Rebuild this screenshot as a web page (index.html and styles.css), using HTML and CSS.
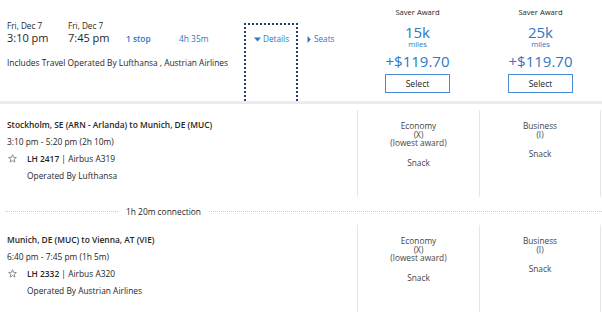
FILE: index.html
```html
<!DOCTYPE html>
<html lang="en">
<head>
    <meta charset="UTF-8">
    <title>Flight details</title>
    <link rel="stylesheet" href="styles.css">
</head>
<body>

    <div class="flight-row">
        <div class="trip">
            <div class="times">
                <div class="time-block dep">
                    <div class="date">Fri, Dec 7</div>
                    <div class="clock">3:10 pm</div>
                </div>
                <div class="time-block arr">
                    <div class="date">Fri, Dec 7</div>
                    <div class="clock">7:45 pm</div>
                </div>
                <div class="stops">1 stop</div>
                <div class="duration">4h 35m</div>
            </div>
            <div class="operated">Includes Travel Operated By Lufthansa , Austrian Airlines</div>
        </div>

        <div class="details-col">
            <a href="#" class="toggle">
                <svg width="7" height="5" viewBox="0 0 7 5"><path d="M0 0.5 H7 L3.5 4.5 Z" fill="#2f78c4"/></svg>Details
            </a>
        </div>

        <div class="seats-col">
            <a href="#" class="toggle">
                <svg width="4" height="7" viewBox="0 0 4 7"><path d="M0.5 0 V7 L3.8 3.5 Z" fill="#2f78c4"/></svg>
                Seats
            </a>
        </div>

        <div class="fare">
            <div class="fare-label">Saver Award</div>
            <div class="miles-amt">15k</div>
            <div class="miles-unit">miles</div>
            <div class="price">+$119.70</div>
            <button class="select-btn">Select</button>
        </div>

        <div class="fare">
            <div class="fare-label">Saver Award</div>
            <div class="miles-amt">25k</div>
            <div class="miles-unit">miles</div>
            <div class="price">+$119.70</div>
            <button class="select-btn">Select</button>
        </div>
    </div>

    <!-- Segmento 1 -->
    <div class="segment">
        <div class="seg-info">
            <div class="route">Stockholm, SE (ARN - Arlanda) to Munich, DE (MUC)</div>
            <div class="seg-line">3:10 pm - 5:20 pm (2h 10m)</div>
            <div class="seg-line flight-no">
                <svg class="star" width="9" height="9" viewBox="0 0 10 10"><path d="M5 0.8 L6.2 3.7 L9.3 3.9 L6.9 5.9 L7.7 9 L5 7.3 L2.3 9 L3.1 5.9 L0.7 3.9 L3.8 3.7 Z" fill="none" stroke="#777" stroke-width="0.9" stroke-linejoin="round"/></svg>
                <b>LH 2417</b>&nbsp;|&nbsp;Airbus A319
            </div>
            <div class="seg-line indent">Operated By Lufthansa</div>
        </div>
        <div class="cabin">
            <div>Economy</div>
            <div>(X)</div>
            <div>(lowest award)</div>
            <div class="meal">Snack</div>
        </div>
        <div class="cabin last">
            <div>Business</div>
            <div>(I)</div>
            <div class="meal">Snack</div>
        </div>
    </div>

    <div class="connection">
        <span class="dots short"></span>
        <span class="conn-text">1h 20m connection</span>
        <span class="dots"></span>
    </div>

    <!-- Segmento 2 -->
    <div class="segment">
        <div class="seg-info">
            <div class="route">Munich, DE (MUC) to Vienna, AT (VIE)</div>
            <div class="seg-line">6:40 pm - 7:45 pm (1h 5m)</div>
            <div class="seg-line flight-no">
                <svg class="star" width="9" height="9" viewBox="0 0 10 10"><path d="M5 0.8 L6.2 3.7 L9.3 3.9 L6.9 5.9 L7.7 9 L5 7.3 L2.3 9 L3.1 5.9 L0.7 3.9 L3.8 3.7 Z" fill="none" stroke="#777" stroke-width="0.9" stroke-linejoin="round"/></svg>
                <b>LH 2332</b>&nbsp;|&nbsp;Airbus A320
            </div>
            <div class="seg-line indent">Operated By Austrian Airlines</div>
        </div>
        <div class="cabin">
            <div>Economy</div>
            <div>(X)</div>
            <div>(lowest award)</div>
            <div class="meal">Snack</div>
        </div>
        <div class="cabin last">
            <div>Business</div>
            <div>(I)</div>
            <div class="meal">Snack</div>
        </div>
    </div>

</body>
</html>
```

FILE: styles.css
```css
body {
    margin: 0;
    padding: 0;
    background-color: white;
    color: #262626;
    font-family: "Open Sans", "Liberation Sans", sans-serif;
    font-size: 8.4px;
}

a {
    text-decoration: none;
}

/* Linha do voo */
.flight-row {
    display: flex;
    height: 101px;
    border-bottom: 3px solid #ebebeb;
    margin-bottom: 6px;
}

.trip {
    width: 237px;
    padding-left: 7px;
    padding-top: 21px;
}

.times {
    display: flex;
    align-items: flex-end;
}

.time-block {
    width: 61px;
}

.time-block.arr {
    width: 58px;
}

.date {
    font-size: 8.2px;
    line-height: 10px;
}

.clock {
    font-size: 11px;
    line-height: 14px;
}

.stops {
    width: 53px;
    color: #2f78c4;
    font-weight: 600;
    line-height: 13px;
}

.duration {
    color: #2f78c4;
    line-height: 13px;
}

.operated {
    margin-top: 12px;
    line-height: 11px;
}

.details-col {
    width: 54px;
    margin-top: 23px;
    border: 2px dotted #22406c;
    border-bottom: none;
    padding-top: 9px;
    padding-left: 8px;
    box-sizing: border-box;
}

.toggle {
    color: #2f78c4;
    font-size: 8.2px;
    line-height: 10px;
    display: flex;
    align-items: center;
    gap: 2px;
}

.seats-col {
    width: 58px;
    padding-top: 34px;
    padding-left: 9px;
    box-sizing: border-box;
}

.seats-col .toggle {
    gap: 3px;
}

/* Tarifas */
.fare {
    width: 123px;
    text-align: center;
    padding-top: 7px;
}

.fare-label {
    font-size: 7.6px;
    line-height: 10px;
}

.miles-amt {
    margin-top: 7px;
    font-size: 15px;
    line-height: 16px;
    color: #2f78c4;
}

.miles-unit {
    font-size: 7.6px;
    line-height: 9px;
    color: #2f78c4;
}

.price {
    margin-top: 3px;
    font-size: 15px;
    line-height: 18px;
    color: #2f78c4;
}

.select-btn {
    margin-top: 4px;
    width: 65px;
    height: 19px;
    border: 1px solid #4a8ad4;
    background: white;
    color: #222;
    font-family: inherit;
    font-size: 8.6px;
    padding: 0;
    cursor: pointer;
}

/* Segmentos */
.segment {
    display: grid;
    grid-template-columns: 357px 122px 122px;
}

.seg-info {
    padding-left: 7px;
    padding-top: 6px;
    height: 81px;
}

.route {
    font-weight: 600;
    line-height: 17px;
}

.seg-line {
    line-height: 17px;
}

.flight-no {
    display: flex;
    align-items: center;
}

.flight-no b {
    font-weight: 600;
}

.star {
    margin-left: 1px;
    margin-right: 10px;
}

.indent {
    padding-left: 20px;
}

.cabin {
    border-left: 1px solid #e6e6e6;
    text-align: center;
    font-size: 8.3px;
    line-height: 8.5px;
    padding-top: 12px;
    color: #444;
}

.cabin.last {
    border-right: 1px solid #e6e6e6;
}

.meal {
    margin-top: 11px;
}

.connection {
    display: flex;
    align-items: center;
    height: 28px;
    padding-left: 5px;
}

.dots {
    flex: 1;
    border-top: 1px dotted #c9c9c9;
}

.dots.short {
    flex: none;
    width: 113px;
}

.conn-text {
    padding: 0 8px;
}
```
